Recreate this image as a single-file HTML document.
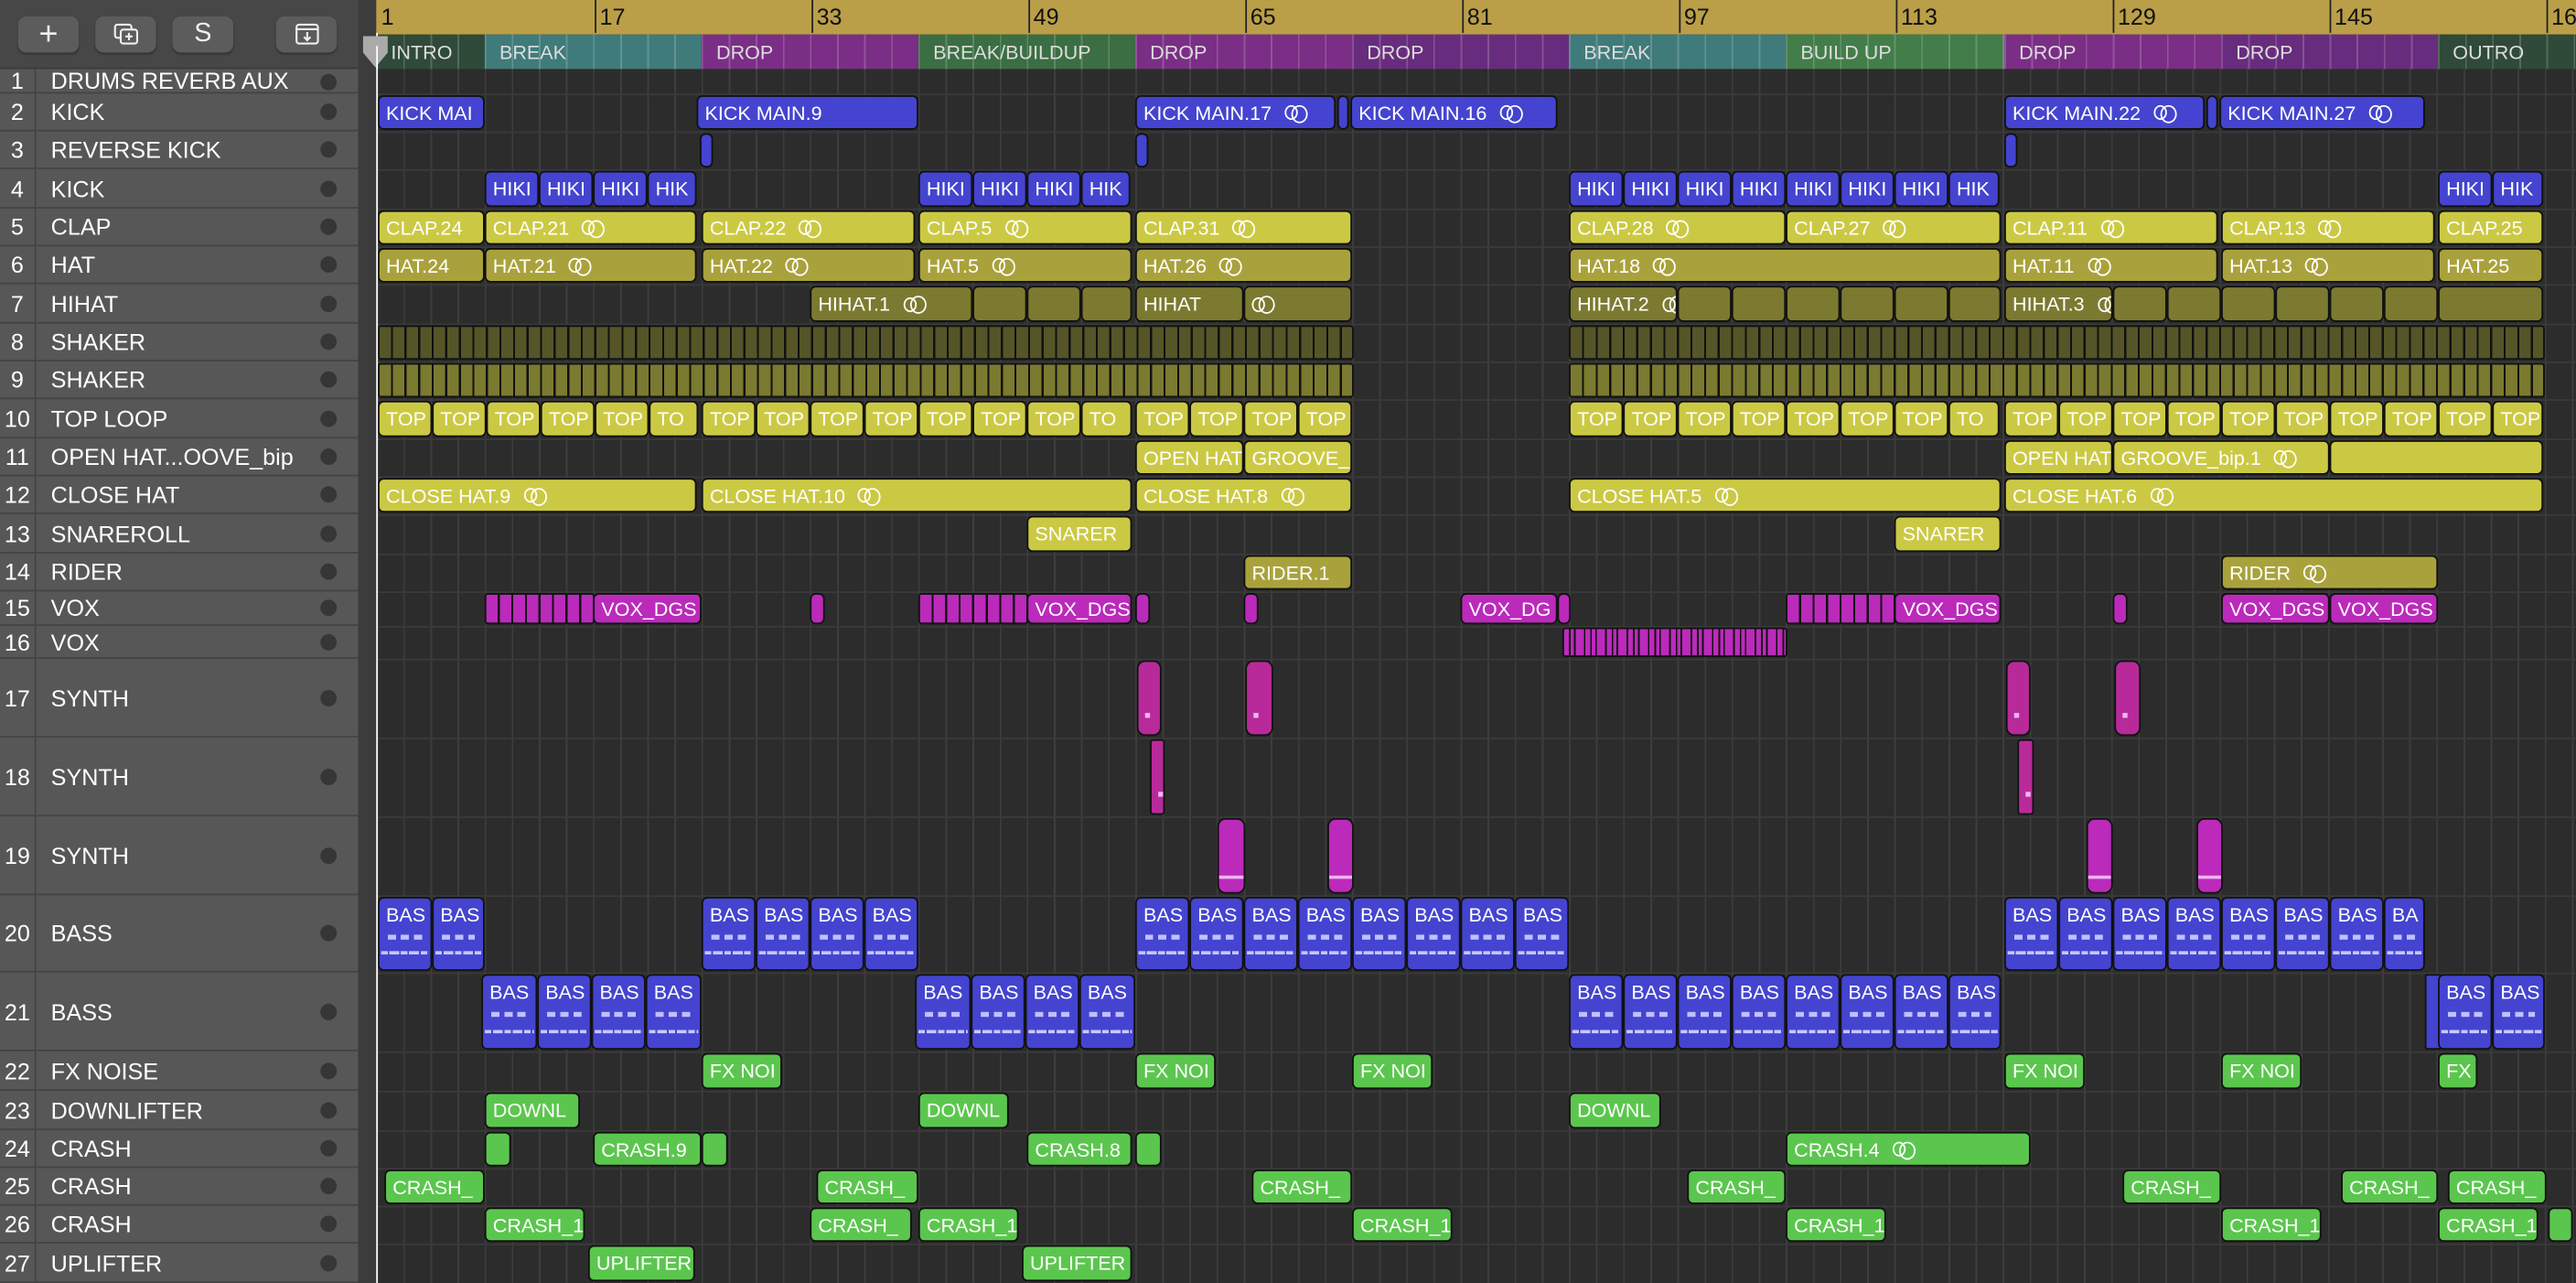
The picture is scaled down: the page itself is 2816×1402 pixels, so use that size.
<!DOCTYPE html>
<html><head><meta charset="utf-8"><style>
*{margin:0;padding:0;box-sizing:border-box}
html,body{width:2816px;height:1402px;overflow:hidden;background:#2c2c2c}
#w{position:absolute;left:0;top:0;width:1568px;height:781px;transform:scale(1.79592,1.7951);transform-origin:0 0;font-family:"Liberation Sans",Arial,sans-serif;background:#2c2c2c;overflow:hidden}
#lp{position:absolute;left:0;top:0;width:218px;height:781px;background:#575757}
#hd{position:absolute;left:0;top:0;width:218px;height:42px;background:#474747;border-bottom:1px solid #3a3a3a}
.bt{position:absolute;top:10px;width:37px;height:22px;background:#5c5c5c;border-radius:5px;box-shadow:0 1px 1px #333;color:#eee;text-align:center;font-size:16px;line-height:22px}
#gap{position:absolute;left:218px;top:0;width:11px;height:781px;background:#3c3c3c}
.tr{position:absolute;left:0;width:218px;border-bottom:1.5px solid #444;color:#fff;font-size:14px}
.tr b{position:absolute;left:0;width:22px;top:0;bottom:0;border-right:1.5px solid #444;font-weight:normal;text-align:center}
.tr span{position:absolute;left:31px}
.tr i{position:absolute;left:195px;width:10px;height:10px;border-radius:50%;background:#363636}
#grid{position:absolute;left:229px;top:42px;width:1339px;height:739px;background:repeating-linear-gradient(90deg,#3d3d3d 0 1px,transparent 1px 16.5px),#2c2c2c}
.hl{position:absolute;left:229px;width:1339px;height:1px;background:#3a3a3a}
#ru{position:absolute;left:229px;top:0;width:1339px;height:20.5px;background:#ba9f48}
.tk{position:absolute;top:0;height:20px;border-left:1px solid #222;font-size:14px;color:#111;padding-left:2px;line-height:20px}
#ar{position:absolute;left:229px;top:20.5px;width:1339px;height:21.5px}
.sec{position:absolute;top:0;height:21.5px;color:#ddd;font-size:12px;line-height:22px;padding-left:9px;background-image:repeating-linear-gradient(90deg,rgba(255,255,255,.18) 0 1px,transparent 1px 16.5px)}
.row{position:absolute;left:0;width:1568px}
.r{position:absolute;top:1px;bottom:1px;border:1px solid #111;border-radius:3.5px;color:#fff;font-size:12px;padding-left:4px;white-space:nowrap;overflow:hidden;display:flex;align-items:center}
.b{background:#4444d0}.y{background:#cbc944}.o{background:#a9a23c}.h{background:#7c7a30}.m{background:#bb2abb}.s{background:#b82a9a}.g{background:#5bc64e}
.sh1{background:repeating-linear-gradient(90deg,#555528 0 7px,#111 7px 8.25px);border-radius:2px}
.sh2{background:repeating-linear-gradient(90deg,#7a7a30 0 7px,#111 7px 8.25px);border-radius:2px}
.vs{background:repeating-linear-gradient(90deg,#bb2abb 0 7px,#111 7px 8.25px);border-radius:2px}
.lp{display:inline-block;width:8px;height:9px;border:1.2px solid #fff;border-radius:50%;margin-left:8px;position:relative}
.lp:after{content:"";position:absolute;left:3px;top:-1.2px;width:8px;height:9px;border:1.2px solid #fff;border-radius:50%}
.bs{align-items:flex-start;padding-top:3px}
.bs:before{content:"";position:absolute;left:5px;right:5px;top:22px;height:3px;background:repeating-linear-gradient(90deg,#c0c0ff 0 5px,transparent 5px 8px)}
.bs:after{content:"";position:absolute;left:1px;right:1px;bottom:9px;height:2px;background:repeating-linear-gradient(90deg,#c8c8ff 0 4px,transparent 4px 5px,#c8c8ff 5px 11px,transparent 11px 12px)}
.s2:after{content:"";position:absolute;left:0;right:0;bottom:8px;height:2px;background:#f3b4f3}
.s1:after{content:"";position:absolute;left:4px;bottom:10px;width:3px;height:3px;background:#f3b4f3}
#ph{position:absolute;left:228.5px;top:20px;width:1px;height:761px;background:#fff}
</style></head><body><div id="w">
<div id="lp"></div>
<div id="hd">
<div class="bt" style="left:11px;font-size:20px">+</div>
<div class="bt" style="left:58px"><svg width="16" height="14" viewBox="0 0 16 14" style="margin-top:4px"><rect x="1" y="1" width="10" height="8" rx="1.5" fill="none" stroke="#eee" stroke-width="1.2"/><rect x="4.5" y="4" width="10" height="8.5" rx="1.5" fill="#5c5c5c" stroke="#eee" stroke-width="1.2"/><path d="M9.5 6v4.5M7.3 8.2h4.4" stroke="#eee" stroke-width="1.2"/></svg></div>
<div class="bt" style="left:105px">S</div>
<div class="bt" style="left:168px"><svg width="16" height="14" viewBox="0 0 16 14" style="margin-top:4px"><rect x="1.5" y="1" width="13" height="11.5" rx="1.5" fill="none" stroke="#eee" stroke-width="1.2"/><path d="M1.5 3.8h13M8 5.5v5M6 8.5l2 2 2-2" fill="none" stroke="#eee" stroke-width="1.2"/></svg></div>
</div>
<div id="gap"></div>

<div class="tr" style="top:42px;height:15px;line-height:15px"><b>1</b><span>DRUMS REVERB AUX</span><i style="top:3px"></i></div>
<div class="tr" style="top:57px;height:23px;line-height:23px"><b>2</b><span>KICK</span><i style="top:6px"></i></div>
<div class="tr" style="top:80px;height:23px;line-height:23px"><b>3</b><span>REVERSE KICK</span><i style="top:6px"></i></div>
<div class="tr" style="top:103px;height:24px;line-height:24px"><b>4</b><span>KICK</span><i style="top:7px"></i></div>
<div class="tr" style="top:127px;height:23px;line-height:23px"><b>5</b><span>CLAP</span><i style="top:6px"></i></div>
<div class="tr" style="top:150px;height:23px;line-height:23px"><b>6</b><span>HAT</span><i style="top:6px"></i></div>
<div class="tr" style="top:173px;height:24px;line-height:24px"><b>7</b><span>HIHAT</span><i style="top:7px"></i></div>
<div class="tr" style="top:197px;height:23px;line-height:23px"><b>8</b><span>SHAKER</span><i style="top:6px"></i></div>
<div class="tr" style="top:220px;height:23px;line-height:23px"><b>9</b><span>SHAKER</span><i style="top:6px"></i></div>
<div class="tr" style="top:243px;height:24px;line-height:24px"><b>10</b><span>TOP LOOP</span><i style="top:7px"></i></div>
<div class="tr" style="top:267px;height:23px;line-height:23px"><b>11</b><span>OPEN HAT...OOVE_bip</span><i style="top:6px"></i></div>
<div class="tr" style="top:290px;height:23px;line-height:23px"><b>12</b><span>CLOSE HAT</span><i style="top:6px"></i></div>
<div class="tr" style="top:313px;height:24px;line-height:24px"><b>13</b><span>SNAREROLL</span><i style="top:7px"></i></div>
<div class="tr" style="top:337px;height:23px;line-height:23px"><b>14</b><span>RIDER</span><i style="top:6px"></i></div>
<div class="tr" style="top:360px;height:21px;line-height:21px"><b>15</b><span>VOX</span><i style="top:5px"></i></div>
<div class="tr" style="top:381px;height:20px;line-height:20px"><b>16</b><span>VOX</span><i style="top:5px"></i></div>
<div class="tr" style="top:401px;height:48px;line-height:48px"><b>17</b><span>SYNTH</span><i style="top:19px"></i></div>
<div class="tr" style="top:449px;height:48px;line-height:48px"><b>18</b><span>SYNTH</span><i style="top:19px"></i></div>
<div class="tr" style="top:497px;height:48px;line-height:48px"><b>19</b><span>SYNTH</span><i style="top:19px"></i></div>
<div class="tr" style="top:545px;height:47px;line-height:47px"><b>20</b><span>BASS</span><i style="top:18px"></i></div>
<div class="tr" style="top:592px;height:48px;line-height:48px"><b>21</b><span>BASS</span><i style="top:19px"></i></div>
<div class="tr" style="top:640px;height:24px;line-height:24px"><b>22</b><span>FX NOISE</span><i style="top:7px"></i></div>
<div class="tr" style="top:664px;height:24px;line-height:24px"><b>23</b><span>DOWNLIFTER</span><i style="top:7px"></i></div>
<div class="tr" style="top:688px;height:23px;line-height:23px"><b>24</b><span>CRASH</span><i style="top:6px"></i></div>
<div class="tr" style="top:711px;height:23px;line-height:23px"><b>25</b><span>CRASH</span><i style="top:6px"></i></div>
<div class="tr" style="top:734px;height:23px;line-height:23px"><b>26</b><span>CRASH</span><i style="top:6px"></i></div>
<div class="tr" style="top:757px;height:24px;line-height:24px"><b>27</b><span>UPLIFTER</span><i style="top:7px"></i></div>

<div id="grid"></div>
<div class="hl" style="top:57px"></div><div class="hl" style="top:80px"></div><div class="hl" style="top:103px"></div><div class="hl" style="top:127px"></div><div class="hl" style="top:150px"></div><div class="hl" style="top:173px"></div><div class="hl" style="top:197px"></div><div class="hl" style="top:220px"></div><div class="hl" style="top:243px"></div><div class="hl" style="top:267px"></div><div class="hl" style="top:290px"></div><div class="hl" style="top:313px"></div><div class="hl" style="top:337px"></div><div class="hl" style="top:360px"></div><div class="hl" style="top:381px"></div><div class="hl" style="top:401px"></div><div class="hl" style="top:449px"></div><div class="hl" style="top:497px"></div><div class="hl" style="top:545px"></div><div class="hl" style="top:592px"></div><div class="hl" style="top:640px"></div><div class="hl" style="top:664px"></div><div class="hl" style="top:688px"></div><div class="hl" style="top:711px"></div><div class="hl" style="top:734px"></div><div class="hl" style="top:757px"></div>

<div id="ru">
<div class="tk" style="left:1px;border-left:none">1</div>
<div class="tk" style="left:133px">17</div><div class="tk" style="left:265px">33</div><div class="tk" style="left:397px">49</div><div class="tk" style="left:529px">65</div><div class="tk" style="left:661px">81</div><div class="tk" style="left:793px">97</div><div class="tk" style="left:925px">113</div><div class="tk" style="left:1057px">129</div><div class="tk" style="left:1189px">145</div><div class="tk" style="left:1321px">161</div>
</div>
<div id="ar">
<div class="sec" style="left:0;width:66px;background-color:#2f4a38">INTRO</div>
<div class="sec" style="left:66px;width:132px;background-color:#3f7b7a">BREAK</div>
<div class="sec" style="left:198px;width:132px;background-color:#7a2e85">DROP</div>
<div class="sec" style="left:330px;width:132px;background-color:#3b6e42">BREAK/BUILDUP</div>
<div class="sec" style="left:462px;width:132px;background-color:#7a2e85">DROP</div>
<div class="sec" style="left:594px;width:132px;background-color:#682c7e">DROP</div>
<div class="sec" style="left:726px;width:132px;background-color:#3f7b7a">BREAK</div>
<div class="sec" style="left:858px;width:133px;background-color:#437d4a">BUILD UP</div>
<div class="sec" style="left:991px;width:132px;background-color:#7a2e85">DROP</div>
<div class="sec" style="left:1123px;width:132px;background-color:#682c7e">DROP</div>
<div class="sec" style="left:1255px;width:84px;background-color:#2f4a38">OUTRO</div>
</div>

<div class="row" style="top:57px;height:23px">
<div class="r b" style="left:230px;width:65px">KICK MAI</div>
<div class="r b" style="left:424px;width:135px">KICK MAIN.9</div>
<div class="r b" style="left:691px;width:122px">KICK MAIN.17<span class="lp"></span></div>
<div class="r b" style="left:814px;width:7px"></div>
<div class="r b" style="left:822px;width:126px">KICK MAIN.16<span class="lp"></span></div>
<div class="r b" style="left:1220px;width:122px">KICK MAIN.22<span class="lp"></span></div>
<div class="r b" style="left:1343px;width:7px"></div>
<div class="r b" style="left:1351px;width:125px">KICK MAIN.27<span class="lp"></span></div>
</div>
<div class="row" style="top:80px;height:23px">
<div class="r b" style="left:426px;width:8px"></div><div class="r b" style="left:691px;width:8px"></div><div class="r b" style="left:1220px;width:8px"></div>
</div>
<div class="row" style="top:103px;height:24px">
<div class="r b" style="left:295px;width:33px">HIKI</div><div class="r b" style="left:328px;width:33px">HIKI</div><div class="r b" style="left:361px;width:33px">HIKI</div><div class="r b" style="left:394px;width:30px">HIK</div>
<div class="r b" style="left:559px;width:33px">HIKI</div><div class="r b" style="left:592px;width:33px">HIKI</div><div class="r b" style="left:625px;width:33px">HIKI</div><div class="r b" style="left:658px;width:30px">HIK</div>
<div class="r b" style="left:955px;width:33px">HIKI</div><div class="r b" style="left:988px;width:33px">HIKI</div><div class="r b" style="left:1021px;width:33px">HIKI</div><div class="r b" style="left:1054px;width:33px">HIKI</div><div class="r b" style="left:1087px;width:33px">HIKI</div><div class="r b" style="left:1120px;width:33px">HIKI</div><div class="r b" style="left:1153px;width:33px">HIKI</div><div class="r b" style="left:1186px;width:31px">HIK</div>
<div class="r b" style="left:1484px;width:33px">HIKI</div><div class="r b" style="left:1517px;width:31px">HIK</div>
</div>
<div class="row" style="top:127px;height:23px">
<div class="r y" style="left:230px;width:65px">CLAP.24</div>
<div class="r y" style="left:295px;width:129px">CLAP.21<span class="lp"></span></div>
<div class="r y" style="left:427px;width:130px">CLAP.22<span class="lp"></span></div>
<div class="r y" style="left:559px;width:130px">CLAP.5<span class="lp"></span></div>
<div class="r y" style="left:691px;width:132px">CLAP.31<span class="lp"></span></div>
<div class="r y" style="left:955px;width:132px">CLAP.28<span class="lp"></span></div>
<div class="r y" style="left:1087px;width:131px">CLAP.27<span class="lp"></span></div>
<div class="r y" style="left:1220px;width:130px">CLAP.11<span class="lp"></span></div>
<div class="r y" style="left:1352px;width:130px">CLAP.13<span class="lp"></span></div>
<div class="r y" style="left:1484px;width:64px">CLAP.25</div>
</div>
<div class="row" style="top:150px;height:23px">
<div class="r o" style="left:230px;width:65px">HAT.24</div>
<div class="r o" style="left:295px;width:129px">HAT.21<span class="lp"></span></div>
<div class="r o" style="left:427px;width:130px">HAT.22<span class="lp"></span></div>
<div class="r o" style="left:559px;width:130px">HAT.5<span class="lp"></span></div>
<div class="r o" style="left:691px;width:132px">HAT.26<span class="lp"></span></div>
<div class="r o" style="left:955px;width:263px">HAT.18<span class="lp"></span></div>
<div class="r o" style="left:1220px;width:130px">HAT.11<span class="lp"></span></div>
<div class="r o" style="left:1352px;width:130px">HAT.13<span class="lp"></span></div>
<div class="r o" style="left:1484px;width:64px">HAT.25</div>
</div>
<div class="row" style="top:173px;height:24px">
<div class="r h" style="left:493px;width:99px">HIHAT.1<span class="lp"></span></div>
<div class="r h" style="left:592px;width:33px"></div><div class="r h" style="left:625px;width:33px"></div><div class="r h" style="left:658px;width:31px"></div>
<div class="r h" style="left:691px;width:66px">HIHAT</div><div class="r h" style="left:757px;width:66px"><span class="lp" style="margin-left:0"></span></div>
<div class="r h" style="left:955px;width:66px">HIHAT.2<span class="lp"></span></div>
<div class="r h" style="left:1021px;width:33px"></div><div class="r h" style="left:1054px;width:33px"></div><div class="r h" style="left:1087px;width:33px"></div><div class="r h" style="left:1120px;width:33px"></div><div class="r h" style="left:1153px;width:33px"></div><div class="r h" style="left:1186px;width:32px"></div>
<div class="r h" style="left:1220px;width:66px">HIHAT.3<span class="lp"></span></div>
<div class="r h" style="left:1286px;width:33px"></div><div class="r h" style="left:1319px;width:33px"></div><div class="r h" style="left:1352px;width:33px"></div><div class="r h" style="left:1385px;width:33px"></div><div class="r h" style="left:1418px;width:33px"></div><div class="r h" style="left:1451px;width:33px"></div><div class="r h" style="left:1484px;width:64px"></div>
</div>
<div class="row" style="top:197px;height:23px">
<div class="r sh1" style="left:230px;width:594px"></div><div class="r sh1" style="left:955px;width:594px"></div>
</div>
<div class="row" style="top:220px;height:23px">
<div class="r sh2" style="left:230px;width:594px"></div><div class="r sh2" style="left:955px;width:594px"></div>
</div>
<div class="row" style="top:243px;height:24px">
<div class="r y" style="left:230px;width:33px">TOP</div><div class="r y" style="left:263px;width:33px">TOP</div><div class="r y" style="left:296px;width:33px">TOP</div><div class="r y" style="left:329px;width:33px">TOP</div><div class="r y" style="left:362px;width:33px">TOP</div><div class="r y" style="left:395px;width:30px">TO</div>
<div class="r y" style="left:427px;width:33px">TOP</div><div class="r y" style="left:460px;width:33px">TOP</div><div class="r y" style="left:493px;width:33px">TOP</div><div class="r y" style="left:526px;width:33px">TOP</div><div class="r y" style="left:559px;width:33px">TOP</div><div class="r y" style="left:592px;width:33px">TOP</div><div class="r y" style="left:625px;width:33px">TOP</div><div class="r y" style="left:658px;width:31px">TO</div>
<div class="r y" style="left:691px;width:33px">TOP</div><div class="r y" style="left:724px;width:33px">TOP</div><div class="r y" style="left:757px;width:33px">TOP</div><div class="r y" style="left:790px;width:33px">TOP</div>
<div class="r y" style="left:955px;width:33px">TOP</div><div class="r y" style="left:988px;width:33px">TOP</div><div class="r y" style="left:1021px;width:33px">TOP</div><div class="r y" style="left:1054px;width:33px">TOP</div><div class="r y" style="left:1087px;width:33px">TOP</div><div class="r y" style="left:1120px;width:33px">TOP</div><div class="r y" style="left:1153px;width:33px">TOP</div><div class="r y" style="left:1186px;width:31px">TO</div>
<div class="r y" style="left:1220px;width:33px">TOP</div><div class="r y" style="left:1253px;width:33px">TOP</div><div class="r y" style="left:1286px;width:33px">TOP</div><div class="r y" style="left:1319px;width:33px">TOP</div><div class="r y" style="left:1352px;width:33px">TOP</div><div class="r y" style="left:1385px;width:33px">TOP</div><div class="r y" style="left:1418px;width:33px">TOP</div><div class="r y" style="left:1451px;width:33px">TOP</div><div class="r y" style="left:1484px;width:33px">TOP</div><div class="r y" style="left:1517px;width:31px">TOP</div>
</div>
<div class="row" style="top:267px;height:23px">
<div class="r y" style="left:691px;width:66px">OPEN HAT</div><div class="r y" style="left:757px;width:66px">GROOVE_</div>
<div class="r y" style="left:1220px;width:66px">OPEN HAT</div><div class="r y" style="left:1286px;width:132px">GROOVE_bip.1<span class="lp"></span></div><div class="r y" style="left:1418px;width:130px"></div>
</div>
<div class="row" style="top:290px;height:23px">
<div class="r y" style="left:230px;width:194px">CLOSE HAT.9<span class="lp"></span></div>
<div class="r y" style="left:427px;width:262px">CLOSE HAT.10<span class="lp"></span></div>
<div class="r y" style="left:691px;width:132px">CLOSE HAT.8<span class="lp"></span></div>
<div class="r y" style="left:955px;width:263px">CLOSE HAT.5<span class="lp"></span></div>
<div class="r y" style="left:1220px;width:328px">CLOSE HAT.6<span class="lp"></span></div>
</div>
<div class="row" style="top:313px;height:24px">
<div class="r y" style="left:625px;width:64px">SNARER</div><div class="r y" style="left:1153px;width:65px">SNARER</div>
</div>
<div class="row" style="top:337px;height:23px">
<div class="r o" style="left:757px;width:66px">RIDER.1</div><div class="r o" style="left:1352px;width:132px">RIDER<span class="lp"></span></div>
</div>
<div class="row" style="top:360px;height:21px">
<div class="r vs" style="left:295px;width:67px"></div><div class="r m" style="left:361px;width:66px">VOX_DGS</div>
<div class="r m" style="left:493px;width:9px"></div>
<div class="r vs" style="left:559px;width:67px"></div><div class="r m" style="left:625px;width:64px">VOX_DGS</div><div class="r m" style="left:691px;width:9px"></div>
<div class="r m" style="left:757px;width:9px"></div>
<div class="r m" style="left:889px;width:59px">VOX_DG</div><div class="r m" style="left:948px;width:8px"></div>
<div class="r vs" style="left:1087px;width:67px"></div><div class="r m" style="left:1153px;width:65px">VOX_DGS</div>
<div class="r m" style="left:1286px;width:9px"></div>
<div class="r m" style="left:1352px;width:66px">VOX_DGS</div><div class="r m" style="left:1418px;width:66px">VOX_DGS</div>
</div>
<div class="row" style="top:381px;height:20px">
<div class="r vs" style="left:951px;width:137px;background:repeating-linear-gradient(90deg,#bb2abb 0 3px,#111 3px 4px,#bb2abb 4px 6px,#111 6px 7px,#bb2abb 7px 12px,#111 12px 13px)"></div>
</div>
<div class="row" style="top:401px;height:48px">
<div class="r s s1" style="left:692px;width:15px;border-radius:5px"></div><div class="r s s1" style="left:758px;width:17px;border-radius:5px"></div>
<div class="r s s1" style="left:1221px;width:15px;border-radius:5px"></div><div class="r s s1" style="left:1287px;width:16px;border-radius:5px"></div>
</div>
<div class="row" style="top:449px;height:48px">
<div class="r s s1" style="left:700px;width:9px;border-radius:2px;padding:0"></div><div class="r s s1" style="left:1228px;width:10px;border-radius:2px;padding:0"></div>
</div>
<div class="row" style="top:497px;height:48px">
<div class="r m s2" style="left:741px;width:17px;border-radius:5px"></div><div class="r m s2" style="left:808px;width:16px;border-radius:5px"></div>
<div class="r m s2" style="left:1270px;width:16px;border-radius:5px"></div><div class="r m s2" style="left:1337px;width:16px;border-radius:5px"></div>
</div>
<div class="row" style="top:545px;height:47px">
<div class="r b bs" style="left:230px;width:33px">BAS</div><div class="r b bs" style="left:263px;width:32px">BAS</div>
<div class="r b bs" style="left:427px;width:33px">BAS</div><div class="r b bs" style="left:460px;width:33px">BAS</div><div class="r b bs" style="left:493px;width:33px">BAS</div><div class="r b bs" style="left:526px;width:33px">BAS</div>
<div class="r b bs" style="left:691px;width:33px">BAS</div><div class="r b bs" style="left:724px;width:33px">BAS</div><div class="r b bs" style="left:757px;width:33px">BAS</div><div class="r b bs" style="left:790px;width:33px">BAS</div><div class="r b bs" style="left:823px;width:33px">BAS</div><div class="r b bs" style="left:856px;width:33px">BAS</div><div class="r b bs" style="left:889px;width:33px">BAS</div><div class="r b bs" style="left:922px;width:33px">BAS</div>
<div class="r b bs" style="left:1220px;width:33px">BAS</div><div class="r b bs" style="left:1253px;width:33px">BAS</div><div class="r b bs" style="left:1286px;width:33px">BAS</div><div class="r b bs" style="left:1319px;width:33px">BAS</div><div class="r b bs" style="left:1352px;width:33px">BAS</div><div class="r b bs" style="left:1385px;width:33px">BAS</div><div class="r b bs" style="left:1418px;width:33px">BAS</div><div class="r b bs" style="left:1451px;width:25px">BA</div>
</div>
<div class="row" style="top:592px;height:48px">
<div class="r b bs" style="left:293px;width:34px">BAS</div><div class="r b bs" style="left:327px;width:33px">BAS</div><div class="r b bs" style="left:360px;width:33px">BAS</div><div class="r b bs" style="left:393px;width:34px">BAS</div>
<div class="r b bs" style="left:557px;width:34px">BAS</div><div class="r b bs" style="left:591px;width:33px">BAS</div><div class="r b bs" style="left:624px;width:33px">BAS</div><div class="r b bs" style="left:657px;width:34px">BAS</div>
<div class="r b bs" style="left:955px;width:33px">BAS</div><div class="r b bs" style="left:988px;width:33px">BAS</div><div class="r b bs" style="left:1021px;width:33px">BAS</div><div class="r b bs" style="left:1054px;width:33px">BAS</div><div class="r b bs" style="left:1087px;width:33px">BAS</div><div class="r b bs" style="left:1120px;width:33px">BAS</div><div class="r b bs" style="left:1153px;width:33px">BAS</div><div class="r b bs" style="left:1186px;width:32px">BAS</div>
<div class="r b" style="left:1476px;width:10px;border-radius:1px"></div><div class="r b bs" style="left:1484px;width:33px">BAS</div><div class="r b bs" style="left:1517px;width:32px">BAS</div>
</div>
<div class="row" style="top:640px;height:24px">
<div class="r g" style="left:427px;width:49px">FX NOI</div><div class="r g" style="left:691px;width:49px">FX NOI</div><div class="r g" style="left:823px;width:49px">FX NOI</div><div class="r g" style="left:1220px;width:49px">FX NOI</div><div class="r g" style="left:1352px;width:49px">FX NOI</div><div class="r g" style="left:1484px;width:24px">FX</div>
</div>
<div class="row" style="top:664px;height:24px">
<div class="r g" style="left:295px;width:58px">DOWNL</div><div class="r g" style="left:559px;width:55px">DOWNL</div><div class="r g" style="left:955px;width:56px">DOWNL</div>
</div>
<div class="row" style="top:688px;height:23px">
<div class="r g" style="left:295px;width:16px"></div><div class="r g" style="left:361px;width:66px">CRASH.9</div><div class="r g" style="left:427px;width:16px"></div>
<div class="r g" style="left:625px;width:64px">CRASH.8</div><div class="r g" style="left:691px;width:16px"></div>
<div class="r g" style="left:1087px;width:149px">CRASH.4<span class="lp"></span></div>
</div>
<div class="row" style="top:711px;height:23px">
<div class="r g" style="left:234px;width:61px">CRASH_</div><div class="r g" style="left:497px;width:62px">CRASH_</div><div class="r g" style="left:762px;width:61px">CRASH_</div><div class="r g" style="left:1027px;width:60px">CRASH_</div><div class="r g" style="left:1292px;width:60px">CRASH_</div><div class="r g" style="left:1425px;width:59px">CRASH_</div><div class="r g" style="left:1490px;width:60px">CRASH_</div>
</div>
<div class="row" style="top:734px;height:23px">
<div class="r g" style="left:295px;width:61px">CRASH_1</div><div class="r g" style="left:493px;width:62px">CRASH_</div><div class="r g" style="left:559px;width:61px">CRASH_1</div><div class="r g" style="left:823px;width:61px">CRASH_1</div><div class="r g" style="left:1087px;width:61px">CRASH_1</div><div class="r g" style="left:1352px;width:61px">CRASH_1</div><div class="r g" style="left:1484px;width:61px">CRASH_1</div><div class="r g" style="left:1551px;width:15px"></div>
</div>
<div class="row" style="top:757px;height:24px">
<div class="r g" style="left:358px;width:65px">UPLIFTER</div><div class="r g" style="left:622px;width:67px">UPLIFTER</div>
</div>

<div id="ph"></div>
<svg style="position:absolute;left:219px;top:20px" width="20" height="22" viewBox="0 0 20 22"><path d="M2 2h15v10l-7.5 9L2 12z" fill="#aaa"/></svg>
<div style="position:absolute;left:228.5px;top:28px;width:1px;height:14px;background:#fff"></div>
</div></body></html>
